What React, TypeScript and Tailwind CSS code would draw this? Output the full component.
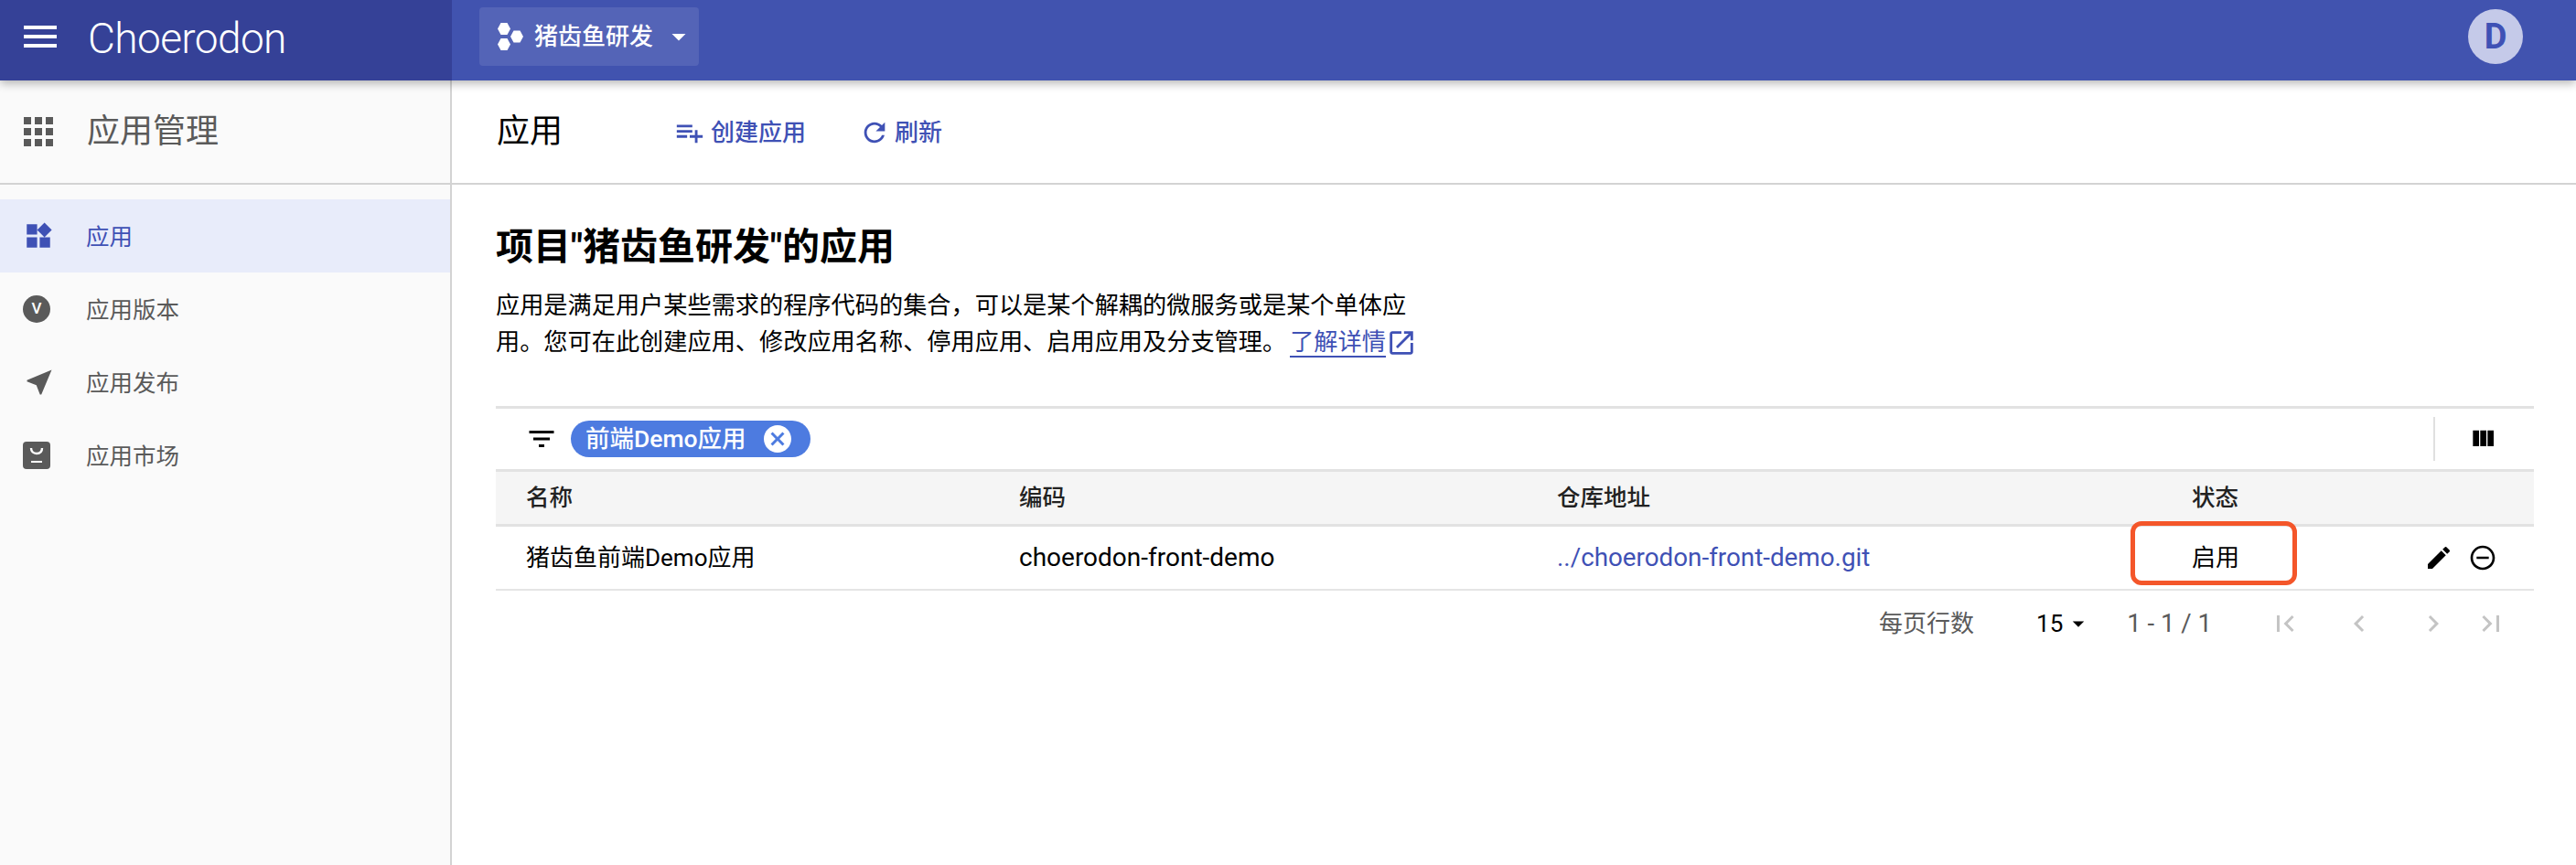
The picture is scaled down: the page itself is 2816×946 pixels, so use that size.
const CJK = "font-['Roboto','Noto_Sans_CJK_SC',sans-serif]";

function Icon({ d, className }: { d: string; className: string }) {
  return (
    <svg viewBox="0 0 24 24" fill="currentColor" className={className}>
      <path d={d} />
    </svg>
  );
}

const paths = {
  menu: "M3 18h18v-2H3v2zm0-5h18v-2H3v2zm0-7v2h18V6H3z",
  apps: "M4 8h4V4H4v4zm6 12h4v-4h-4v4zm-6 0h4v-4H4v4zm0-6h4v-4H4v4zm6 0h4v-4h-4v4zm6-10v4h4V4h-4zm-6 4h4V4h-4v4zm6 6h4v-4h-4v4zm0 6h4v-4h-4v4z",
  widgets: "M13 13v8h8v-8h-8zM3 21h8v-8H3v8zM3 3v8h8V3H3zm13.66-1.31L11 7.34 16.66 13l5.66-5.66-5.66-5.65z",
  near: "M21 3L3 10.53v.98l6.84 2.65L12.48 21h.98L21 3z",
  filter: "M10 18h4v-2h-4v2zM3 6v2h18V6H3zm3 7h12v-2H6v2z",
  week: "M10 18h5V5h-5v13zm-6 0h5V5H4v13zM16 5v13h5V5h-5z",
  edit: "M3 17.25V21h3.75L17.81 9.94l-3.75-3.75L3 17.25zM20.71 7.04c.39-.39.39-1.02 0-1.41l-2.34-2.34c-.39-.39-1.02-.39-1.41 0l-1.83 1.83 3.75 3.75 1.83-1.83z",
  remove: "M7 11v2h10v-2H7zm5-9C6.48 2 2 6.48 2 12s4.48 10 10 10 10-4.48 10-10S17.52 2 12 2zm0 18c-4.41 0-8-3.59-8-8s3.59-8 8-8 8 3.59 8 8-3.59 8-8 8z",
  refresh: "M17.65 6.35C16.2 4.9 14.21 4 12 4c-4.42 0-7.99 3.58-7.99 8s3.57 8 7.99 8c3.73 0 6.84-2.55 7.73-6h-2.08c-.82 2.33-3.04 4-5.65 4-3.31 0-6-2.69-6-6s2.69-6 6-6c1.66 0 3.14.69 4.22 1.78L13 11h7V4l-2.35 2.35z",
  add: "M14 10H2v2h12v-2zm0-4H2v2h12V6zm4 8v-4h-2v4h-4v2h4v4h2v-4h4v-2h-4zM2 16h8v-2H2v2z",
  open: "M19 19H5V5h7V3H5c-1.11 0-2 .9-2 2v14c0 1.1.89 2 2 2h14c1.1 0 2-.9 2-2v-7h-2v7zM14 3v2h3.59l-9.83 9.83 1.41 1.41L19 6.41V10h2V3h-7z",
  first: "M18.41 16.59L13.82 12l4.59-4.59L17 6l-6 6 6 6zM6 6h2v12H6z",
  prev: "M15.41 7.41L14 6l-6 6 6 6 1.41-1.41L10.83 12z",
  next: "M10 6L8.59 7.41 13.17 12l-4.58 4.59L10 18l6-6z",
  last: "M5.59 7.41L10.18 12l-4.59 4.59L7 18l6-6-6-6zM16 6h2v12h-2z",
  cancel: "M12 2C6.47 2 2 6.47 2 12s4.47 10 10 10 10-4.47 10-10S17.53 2 12 2zm5 13.59L15.59 17 12 13.41 8.41 17 7 15.59 10.59 12 7 8.41 8.41 7 12 10.59 15.59 7 17 8.41 13.41 12 17 15.59z",
  drop: "M7 10l5 5 5-5z",
};

function Versions() {
  return (
    <div className="w-[30px] h-[30px] rounded-full bg-[#5a5a5a] flex items-center justify-center text-white text-[17px] font-medium">
      V
    </div>
  );
}

function Market() {
  return (
    <svg viewBox="0 0 30 30" className="w-[30px] h-[30px]">
      <rect width="30" height="30" rx="4" fill="#5a5a5a" />
      <path d="M9 7c0 4 2.5 6 6 6s6-2 6-6" fill="none" stroke="#fff" strokeWidth="2.4" />
      <rect x="9" y="21" width="12" height="2" fill="#fff" />
    </svg>
  );
}

function Hexes() {
  const hex = "M0 6.5 L3.5 0 L10.5 0 L14 6.5 L10.5 13 L3.5 13 Z";
  return (
    <svg viewBox="0 0 28 30" className="w-[28px] h-[30px]" fill="#fff">
      <path d={hex} />
      <path d={hex} transform="translate(14 8.5)" />
      <path d={hex} transform="translate(0 17)" />
    </svg>
  );
}

const nav = [
  { label: "应用", icon: <Icon d={paths.widgets} className="w-[34px] h-[34px] text-[#3f51b5]" />, active: true },
  { label: "应用版本", icon: <Versions /> },
  { label: "应用发布", icon: <Icon d={paths.near} className="w-[36px] h-[36px] text-[#5a5a5a]" /> },
  { label: "应用市场", icon: <Market /> },
];

const cols = "grid grid-cols-[539px_589px_695px_1fr] items-center";

export default function App() {
  return (
    <div className={`w-[2816px] h-[946px] bg-white flex flex-col overflow-hidden ${CJK}`}>
      <header className="h-[88px] flex shrink-0 bg-[#4153af] relative z-10 shadow-[0_3px_10px_rgba(0,0,0,0.3)] text-white">
        <div className="w-[494px] bg-[#354197] flex items-center pl-[20px]">
          <Icon d={paths.menu} className="mb-[8px] w-[48px] h-[48px]" />
          <span className="mb-[3px] ml-[28px] text-[46px] font-light tracking-[-0.6px]">Choerodon</span>
        </div>
        <div className="flex-1 flex items-center justify-between pl-[30px] pr-[58px] pb-[8px]">
          <div className="w-[240px] h-[64px] rounded-[4px] bg-white/10 flex items-center pl-[20px]">
            <Hexes />
            <span className="ml-[12px] text-[26px] font-medium">猪齿鱼研发</span>
            <Icon d={paths.drop} className="ml-[10px] w-[36px] h-[36px]" />
          </div>
          <div className="w-[60px] h-[60px] rounded-full bg-[#c5cae9] text-[#3f51b5] flex items-center justify-center text-[38px] font-bold">
            D
          </div>
        </div>
      </header>

      <div className="flex flex-1">
        <aside className="w-[494px] shrink-0 bg-[#fafafa] border-r-2 border-[#d3d3d3]">
          <div className="h-[114px] flex items-center pl-[18px] border-b-2 border-[#d3d3d3]">
            <Icon d={paths.apps} className="w-[48px] h-[48px] text-[#5a5a5a]" />
            <span className="ml-[29px] text-[36px] text-[#5a5a5a]">应用管理</span>
          </div>
          <nav className="pt-[16px]">
            {nav.map((n) => (
              <div key={n.label} className={`h-[80px] flex items-center ${n.active ? "bg-[#e8ecfa] text-[#3f51b5]" : "text-[#5a5a5a]"}`}>
                <div className="w-[94px] pl-[25px] flex justify-start">{n.icon}</div>
                <span className="pt-[2px] text-[25.5px]">{n.label}</span>
              </div>
            ))}
          </nav>
        </aside>

        <main className="flex-1 min-w-0">
          <div className="h-[114px] flex items-center pl-[49px] border-b-2 border-[#d3d3d3]">
            <span className="w-[194px] text-[36px] text-black">应用</span>
            <button className="pt-[2px] flex items-center text-[#3f51b5] text-[26px] font-medium">
              <Icon d={paths.add} className="w-[34px] h-[34px]" />
              <span className="ml-[6px]">创建应用</span>
            </button>
            <button className="pt-[2px] ml-[58px] flex items-center text-[#3f51b5] text-[26px] font-medium">
              <Icon d={paths.refresh} className="w-[34px] h-[34px]" />
              <span className="ml-[5px]">刷新</span>
            </button>
          </div>

          <div className="pl-[48px] pr-[46px]">
            <h1 className="mt-[41px] text-[41px] leading-[54px] font-bold text-black">项目"猪齿鱼研发"的应用</h1>
            <p className="mt-[17px] w-[1010px] text-[26.2px] leading-[40px] text-black">
              应用是满足用户某些需求的程序代码的集合，可以是某个解耦的微服务或是某个单体应用。您可在此创建应用、修改应用名称、停用应用、启用应用及分支管理。
              <a className="ml-[4px] text-[#3f51b5] border-b-2 border-[#3f51b5]">了解详情</a>
              <Icon d={paths.open} className="inline-block w-[34px] h-[34px] text-[#3f51b5] align-[-9px]" />
            </p>

            <section className="mt-[50px] w-[2228px] relative text-black text-[26px]">
              <div className="h-[72px] border-y-[3px] border-[#e2e2e2] flex items-center pl-[32px]">
                <Icon d={paths.filter} className="w-[36px] h-[36px]" />
                <div className="ml-[14px] h-[40px] w-[262px] rounded-full bg-[#4d7be0] text-white flex items-center pl-[16px] text-[26.5px] font-medium">
                  <span>前端Demo应用</span>
                  <Icon d={paths.cancel} className="ml-[16px] w-[36px] h-[36px]" />
                </div>
                <div className="ml-auto h-[48px] border-l-2 border-[#e0e0e0] w-[110px] flex items-center justify-center pr-[4px]">
                  <Icon d={paths.week} className="w-[32px] h-[32px]" />
                </div>
              </div>

              <div className={`${cols} h-[60px] bg-[#f5f5f5] border-b-[3px] border-[#e2e2e2] text-[#222] text-[25.5px] font-medium`}>
                <span className="pl-[33px]">名称</span>
                <span className="pl-[33px]">编码</span>
                <span className="pl-[32px]">仓库地址</span>
                <span className="pl-[31px]">状态</span>
              </div>

              <div className={`${cols} h-[70px] border-b-[2px] border-[#e5e5e5]`}>
                <span className="pl-[33px]">猪齿鱼前端Demo应用</span>
                <span className="pl-[33px] text-[28px]">choerodon-front-demo</span>
                <span className="pl-[32px] text-[#3f51b5] text-[27.8px]">../choerodon-front-demo.git</span>
                <div className="relative flex items-center justify-between pl-[31px] pr-[40px]">
                  <span>启用</span>
                  <div className="flex items-center gap-[16px]">
                    <Icon d={paths.edit} className="w-[32px] h-[32px]" />
                    <Icon d={paths.remove} className="w-[32px] h-[32px]" />
                  </div>
                  <div className="absolute left-[-36px] top-[-21px] w-[182px] h-[70px] rounded-[12px] border-[5px] border-[#f4562a]" />
                </div>
              </div>

              <div className="h-[72px] flex items-center text-[#5a5a5a] text-[26px]">
                <span className="ml-[1512px]">每页行数</span>
                <span className="ml-[68px] text-black">15</span>
                <Icon d={paths.drop} className="ml-[2px] w-[30px] h-[30px] text-black" />
                <span className="ml-[38px] text-[27.5px]">1 - 1 / 1</span>
                <div className="ml-[62px] flex items-center gap-[45px] text-[#c4c4c4]">
                  <Icon d={paths.first} className="w-[36px] h-[36px]" />
                  <Icon d={paths.prev} className="w-[36px] h-[36px]" />
                  <Icon d={paths.next} className="w-[36px] h-[36px]" />
                  <Icon d={paths.last} className="ml-[-18px] w-[36px] h-[36px]" />
                </div>
              </div>
            </section>
          </div>
        </main>
      </div>
    </div>
  );
}
